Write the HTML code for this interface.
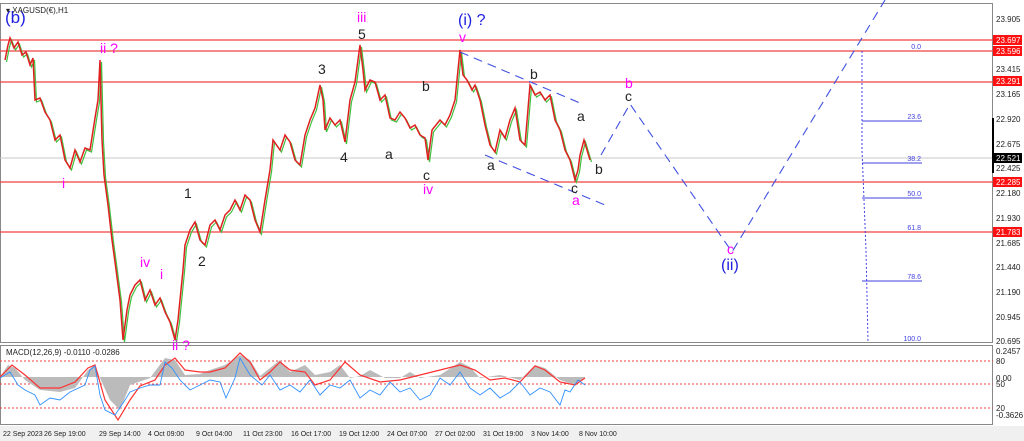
<!DOCTYPE html>
<html><head><meta charset="utf-8"><style>
body{margin:0;width:1024px;height:441px;background:#fff;overflow:hidden;font-family:"Liberation Sans",sans-serif}
svg{display:block}
</style></head><body>
<svg width="1024" height="441" viewBox="0 0 1024 441" font-family="Liberation Sans, sans-serif">
<rect x="0" y="0" width="1024" height="441" fill="#fff"/>
<rect x="0.5" y="3.5" width="992" height="339" fill="none" stroke="#888"/>
<rect x="0.5" y="345.5" width="992" height="79" fill="none" stroke="#888"/>
<rect x="0" y="426" width="1024" height="15" fill="#f0f0f0"/>
<line x1="0" y1="158" x2="993" y2="158" stroke="#c8c8c8"/>
<g stroke="#f04040" stroke-width="1.3">
<line x1="0" y1="40" x2="993" y2="40"/><line x1="0" y1="51" x2="993" y2="51"/>
<line x1="0" y1="82" x2="993" y2="82"/><line x1="0" y1="182" x2="993" y2="182"/>
<line x1="0" y1="232" x2="993" y2="232"/></g>
<g stroke="#4040e0" stroke-width="1">
<line x1="862" y1="121" x2="922" y2="121"/><line x1="862" y1="163" x2="922" y2="163"/>
<line x1="862" y1="198" x2="922" y2="198"/><line x1="862" y1="281" x2="922" y2="281"/>
<polyline points="862,51 862,150 866,250 868,342" fill="none" stroke-dasharray="2,2"/>
</g>
<g fill="#4040e0" font-size="7" text-anchor="end">
<text x="921" y="49">0.0</text><text x="921" y="119">23.6</text><text x="921" y="161">38.2</text>
<text x="921" y="196">50.0</text><text x="921" y="230">61.8</text><text x="921" y="279">78.6</text><text x="921" y="341">100.0</text></g>
<!-- price -->
<polyline fill="none" stroke="#40c040" stroke-width="1.2" transform="translate(1.5,2)" points="5,60 8,45 10,38 14,48 18,42 22,55 26,52 30,65 33,58 35,100 40,98 45,112 50,120 55,140 60,135 65,160 70,168 75,150 80,162 85,148 90,150 95,118 98,100 100,60 102,140 104,175 108,205 112,240 115,262 120,300 123,340 127,310 130,295 135,285 140,280 145,300 150,290 155,305 160,298 165,312 170,322 175,340 178,320 180,300 183,270 185,245 190,230 195,222 200,240 205,245 210,225 215,220 220,230 225,215 230,210 235,200 240,210 245,195 250,200 255,220 260,232 265,200 270,170 273,140 280,150 285,135 290,142 295,160 300,165 305,135 310,120 315,108 320,85 323,100 325,130 330,118 335,125 340,120 345,142 350,100 355,82 360,45 363,70 365,90 370,80 375,82 380,100 385,95 390,118 395,120 400,112 405,118 410,128 415,125 420,135 425,138 428,160 432,130 440,120 445,125 450,115 455,100 460,50 463,75 467,80 472,90 475,85 480,100 485,125 490,145 495,152 500,130 505,138 510,120 515,108 520,140 525,145 530,85 535,95 540,92 545,100 550,95 555,120 560,130 565,150 570,160 575,180 578,170 580,155 584,140 587,150 590,160"/>
<polyline fill="none" stroke="#e02020" stroke-width="1.5" points="5,60 8,45 10,38 14,48 18,42 22,55 26,52 30,65 33,58 35,100 40,98 45,112 50,120 55,140 60,135 65,160 70,168 75,150 80,162 85,148 90,150 95,118 98,100 100,60 102,140 104,175 108,205 112,240 115,262 120,300 123,340 127,310 130,295 135,285 140,280 145,300 150,290 155,305 160,298 165,312 170,322 175,340 178,320 180,300 183,270 185,245 190,230 195,222 200,240 205,245 210,225 215,220 220,230 225,215 230,210 235,200 240,210 245,195 250,200 255,220 260,232 265,200 270,170 273,140 280,150 285,135 290,142 295,160 300,165 305,135 310,120 315,108 320,85 323,100 325,130 330,118 335,125 340,120 345,142 350,100 355,82 360,45 363,70 365,90 370,80 375,82 380,100 385,95 390,118 395,120 400,112 405,118 410,128 415,125 420,135 425,138 428,160 432,130 440,120 445,125 450,115 455,100 460,50 463,75 467,80 472,90 475,85 480,100 485,125 490,145 495,152 500,130 505,138 510,120 515,108 520,140 525,145 530,85 535,95 540,92 545,100 550,95 555,120 560,130 565,150 570,160 575,180 578,170 580,155 584,140 587,150 590,160"/>
<g stroke="#4050e0" stroke-width="1.1" stroke-dasharray="9,6" fill="none">
<line x1="460" y1="52" x2="580" y2="103"/><line x1="485" y1="155" x2="605" y2="205"/>
<polyline points="601,155 630,104 732,252 885,0"/></g>
<g font-size="14">
<text x="5" y="23" fill="#2020e0" font-size="17">(b)</text>
<text x="100" y="53" fill="#ff00ff">ii ?</text>
<text x="62" y="188" fill="#ff00ff">i</text>
<text x="140" y="267" fill="#ff00ff">iv</text><text x="160" y="279" fill="#ff00ff">i</text>
<text x="172" y="350" fill="#ff00ff">ii ?</text>
<text x="184" y="198" fill="#222">1</text><text x="198" y="266" fill="#222">2</text>
<text x="318" y="74" fill="#222">3</text><text x="340" y="162" fill="#222">4</text>
<text x="358" y="39" fill="#222">5</text><text x="357" y="22" fill="#ff00ff">iii</text>
<text x="385" y="159" fill="#222">a</text><text x="422" y="91" fill="#222">b</text>
<text x="423" y="180" fill="#222">c</text><text x="423" y="194" fill="#ff00ff">iv</text>
<text x="458" y="25" fill="#2020e0" font-size="16">(i) ?</text>
<text x="459" y="42" fill="#ff00ff">v</text>
<text x="487" y="170" fill="#222">a</text><text x="530" y="79" fill="#222">b</text>
<text x="577" y="121" fill="#222">a</text><text x="595" y="174" fill="#222">b</text>
<text x="571" y="193" fill="#222">c</text><text x="572" y="205" fill="#ff00ff">a</text>
<text x="625" y="88" fill="#ff00ff">b</text><text x="625" y="101" fill="#222">c</text>
<text x="727" y="254" fill="#ff00ff">c</text>
<text x="721" y="270" fill="#2020e0" font-size="16">(ii)</text>
</g>
<g font-size="8" fill="#222">
<text x="996" y="22">23.905</text><text x="996" y="72">23.415</text><text x="996" y="97">23.165</text>
<text x="996" y="122">22.920</text><text x="996" y="147">22.675</text><text x="996" y="171">22.425</text>
<text x="996" y="196">22.180</text><text x="996" y="221">21.930</text><text x="996" y="246">21.685</text>
<text x="996" y="270">21.440</text><text x="996" y="295">21.190</text><text x="996" y="320">20.945</text>
<text x="996" y="344">20.695</text>
<text x="996" y="354">0.2457</text><text x="996" y="381">0.00</text><text x="996" y="418">-0.3626</text>
<text x="996" y="364">80</text><text x="996" y="387">50</text><text x="996" y="411">20</text></g>
<g font-size="8" fill="#fff">
<rect x="993" y="35" width="29" height="10" fill="#ff1010"/><text x="996" y="43">23.697</text>
<rect x="993" y="46" width="29" height="10" fill="#ff1010"/><text x="996" y="54">23.596</text>
<rect x="993" y="76" width="29" height="10" fill="#ff1010"/><text x="996" y="84">23.291</text>
<rect x="993" y="153" width="29" height="10" fill="#000"/><text x="996" y="161">22.521</text>
<rect x="993" y="177" width="29" height="10" fill="#ff1010"/><text x="996" y="185">22.285</text>
<rect x="993" y="227" width="29" height="10" fill="#ff1010"/><text x="996" y="235">21.783</text></g>
<line x1="993" y1="118" x2="993" y2="173" stroke="#000" stroke-width="2"/>
<text x="6" y="355" font-size="8" fill="#222">MACD(12,26,9) -0.0110 -0.0286</text>
<g stroke="#f04040" stroke-dasharray="2,2"><line x1="0" y1="361" x2="993" y2="361"/><line x1="0" y1="384" x2="993" y2="384"/><line x1="0" y1="408" x2="993" y2="408"/></g>
<path d="M0,377 L8,365 L15,368 L25,380 L40,390 L60,392 L75,388 L88,370 L95,365 L100,378 L110,400 L120,410 L130,385 L150,378 L165,358 L175,360 L185,375 L200,374 L210,370 L225,365 L240,355 L250,360 L260,376 L270,368 L280,360 L290,372 L305,365 L315,375 L330,372 L340,365 L350,378 L360,376 L370,370 L385,378 L400,378 L410,372 L420,378 L440,375 L460,362 L470,367 L480,378 L500,375 L520,380 L535,365 L545,368 L560,380 L575,385 L585,378 L585,377 Z" fill="#bbb"/>
<polyline fill="none" stroke="#ff3030" stroke-width="1.2" points="0,377 12,365 25,375 40,388 60,388 75,382 88,368 95,365 105,400 118,420 130,400 140,386 155,380 165,365 175,358 185,370 200,372 210,372 225,368 240,353 250,362 260,380 270,372 280,362 290,370 305,372 315,385 330,380 345,362 360,375 380,382 400,380 420,375 440,370 460,365 475,370 490,380 505,378 520,382 535,366 545,370 560,382 575,385 585,378"/>
<polyline fill="none" stroke="#3090ff" stroke-width="0.9" points="0,378 10,372 18,385 25,390 35,395 40,405 50,398 60,400 70,392 85,385 90,370 95,366 100,395 105,410 115,415 125,400 130,392 140,388 150,385 160,385 165,362 172,368 180,380 190,390 200,385 210,380 220,382 226,398 235,378 240,358 250,375 262,385 270,375 280,390 290,385 300,392 310,380 320,395 330,385 340,388 350,380 360,398 370,390 380,395 390,382 400,392 410,388 420,400 430,395 440,378 450,385 460,372 470,388 480,395 490,388 500,398 510,392 520,382 530,395 540,388 550,392 560,405 565,390 570,392 578,380 585,385"/>
<g font-size="7" fill="#222">
<text x="3" y="436">22 Sep 2023</text><text x="44" y="436">26 Sep 19:00</text><text x="99" y="436">29 Sep 14:00</text>
<text x="148" y="436">4 Oct 09:00</text><text x="196" y="436">9 Oct 04:00</text><text x="243" y="436">11 Oct 23:00</text>
<text x="291" y="436">16 Oct 17:00</text><text x="339" y="436">19 Oct 12:00</text><text x="387" y="436">24 Oct 07:00</text>
<text x="435" y="436">27 Oct 02:00</text><text x="483" y="436">31 Oct 19:00</text><text x="531" y="436">3 Nov 14:00</text>
<text x="579" y="436">8 Nov 10:00</text></g>
<text x="6" y="13" font-size="8" fill="#222">▾ XAGUSD(€),H1</text>
</svg>
</body></html>
